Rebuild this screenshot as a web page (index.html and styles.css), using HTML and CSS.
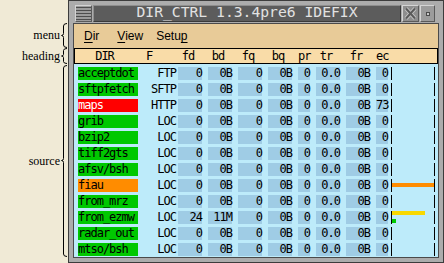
FILE: index.html
```html
<!DOCTYPE html>
<html lang="en">
<head>
    <meta charset="UTF-8">
    <title>DIR_CTRL</title>
    <link rel="stylesheet" href="styles.css">
</head>
<body>
    <div class="notes">
        <div class="note note-menu">
            <span>menu</span>
            <svg width="6" height="25" viewBox="0 0 6 25"><path d="M6,0.5 Q2.5,0.5 2.5,3 V10.5 Q2.5,12.5 0.5,12.5 Q2.5,12.5 2.5,14.5 V22 Q2.5,24.5 6,24.5"/></svg>
        </div>
        <div class="note note-heading">
            <span>heading</span>
            <svg width="6" height="16" viewBox="0 0 6 16"><path d="M6,0.5 Q2.5,0.5 2.5,2.5 V6.5 Q2.5,8 0.5,8 Q2.5,8 2.5,9.5 V13.5 Q2.5,15.5 6,15.5"/></svg>
        </div>
        <div class="note note-source">
            <span>source</span>
            <svg width="6" height="192" viewBox="0 0 6 192"><path d="M6,0.5 Q2.5,0.5 2.5,3 V93.5 Q2.5,95.5 0.5,95.5 Q2.5,95.5 2.5,97.5 V189 Q2.5,191.5 6,191.5"/></svg>
        </div>
    </div>

    <div class="win">
        <div class="titlebar">
            <div class="tbtn menu-btn"></div>
            <div class="title">DIR_CTRL 1.3.4pre6 IDEFIX</div>
            <div class="tbtn close-btn">
                <svg width="15" height="15" viewBox="0 0 15 15">
                    <path class="x-light" d="M3,2.5 L12,12.5 M12,2.5 L3,12.5"/>
                    <path class="x-dark" d="M3,2.5 L12,12.5 M12,2.5 L3,12.5"/>
                </svg>
            </div>
            <div class="tbtn min-btn"><span></span></div>
        </div>

        <div class="client">
            <div class="menubar">
                <span><u>D</u>ir</span>
                <span><u>V</u>iew</span>
                <span>Setu<u>p</u></span>
            </div>

            <div class="heading">
                <div class="name">DIR</div>
                <div class="f">F</div>
                <div class="n">fd</div>
                <div class="n">bd</div>
                <div class="n">fq</div>
                <div class="n">bq</div>
                <div class="s">pr</div>
                <div class="n">tr</div>
                <div class="n">fr</div>
                <div class="s">ec</div>
            </div>

            <div class="data">
                <div class="row">
                    <div class="name ok">acceptdot</div><div class="f">FTP</div>
                    <div class="n">0</div><div class="n">0B</div><div class="n">0</div><div class="n">0B</div>
                    <div class="s">0</div><div class="n">0.0</div><div class="n">0B</div><div class="s">0</div>
                    <div class="bar"><div class="slot"></div><div class="slot"></div><div class="slot"></div></div>
                </div>
                <div class="row">
                    <div class="name ok">sftpfetch</div><div class="f">SFTP</div>
                    <div class="n">0</div><div class="n">0B</div><div class="n">0</div><div class="n">0B</div>
                    <div class="s">0</div><div class="n">0.0</div><div class="n">0B</div><div class="s">0</div>
                    <div class="bar"><div class="slot"></div><div class="slot"></div><div class="slot"></div></div>
                </div>
                <div class="row">
                    <div class="name err">maps</div><div class="f">HTTP</div>
                    <div class="n">0</div><div class="n">0B</div><div class="n">0</div><div class="n">0B</div>
                    <div class="s">0</div><div class="n">0.0</div><div class="n">0B</div><div class="s">73</div>
                    <div class="bar"><div class="slot"></div><div class="slot"></div><div class="slot"></div></div>
                </div>
                <div class="row">
                    <div class="name ok">grib</div><div class="f">LOC</div>
                    <div class="n">0</div><div class="n">0B</div><div class="n">0</div><div class="n">0B</div>
                    <div class="s">0</div><div class="n">0.0</div><div class="n">0B</div><div class="s">0</div>
                    <div class="bar"><div class="slot"></div><div class="slot"></div><div class="slot"></div></div>
                </div>
                <div class="row">
                    <div class="name ok">bzip2</div><div class="f">LOC</div>
                    <div class="n">0</div><div class="n">0B</div><div class="n">0</div><div class="n">0B</div>
                    <div class="s">0</div><div class="n">0.0</div><div class="n">0B</div><div class="s">0</div>
                    <div class="bar"><div class="slot"></div><div class="slot"></div><div class="slot"></div></div>
                </div>
                <div class="row">
                    <div class="name ok">tiff2gts</div><div class="f">LOC</div>
                    <div class="n">0</div><div class="n">0B</div><div class="n">0</div><div class="n">0B</div>
                    <div class="s">0</div><div class="n">0.0</div><div class="n">0B</div><div class="s">0</div>
                    <div class="bar"><div class="slot"></div><div class="slot"></div><div class="slot"></div></div>
                </div>
                <div class="row">
                    <div class="name ok">afsv/bsh</div><div class="f">LOC</div>
                    <div class="n">0</div><div class="n">0B</div><div class="n">0</div><div class="n">0B</div>
                    <div class="s">0</div><div class="n">0.0</div><div class="n">0B</div><div class="s">0</div>
                    <div class="bar"><div class="slot"></div><div class="slot"></div><div class="slot"></div></div>
                </div>
                <div class="row">
                    <div class="name warn">fiau</div><div class="f">LOC</div>
                    <div class="n">0</div><div class="n">0B</div><div class="n">0</div><div class="n">0B</div>
                    <div class="s">0</div><div class="n">0.0</div><div class="n">0B</div><div class="s">0</div>
                    <div class="bar"><div class="slot"></div><div class="slot"><i class="orange" style="width:42px"></i></div><div class="slot"></div></div>
                </div>
                <div class="row">
                    <div class="name ok">from_mrz</div><div class="f">LOC</div>
                    <div class="n">0</div><div class="n">0B</div><div class="n">0</div><div class="n">0B</div>
                    <div class="s">0</div><div class="n">0.0</div><div class="n">0B</div><div class="s">0</div>
                    <div class="bar"><div class="slot"></div><div class="slot"></div><div class="slot"></div></div>
                </div>
                <div class="row">
                    <div class="name ok">from_ezmw</div><div class="f">LOC</div>
                    <div class="n">24</div><div class="n">11M</div><div class="n">0</div><div class="n">0B</div>
                    <div class="s">0</div><div class="n">0.0</div><div class="n">0B</div><div class="s">0</div>
                    <div class="bar"><div class="slot"><i class="yellow" style="width:33px"></i></div><div class="slot"></div><div class="slot"><i class="green" style="width:4px"></i></div></div>
                </div>
                <div class="row">
                    <div class="name ok">radar_out</div><div class="f">LOC</div>
                    <div class="n">0</div><div class="n">0B</div><div class="n">0</div><div class="n">0B</div>
                    <div class="s">0</div><div class="n">0.0</div><div class="n">0B</div><div class="s">0</div>
                    <div class="bar"><div class="slot"></div><div class="slot"></div><div class="slot"></div></div>
                </div>
                <div class="row">
                    <div class="name ok">mtso/bsh</div><div class="f">LOC</div>
                    <div class="n">0</div><div class="n">0B</div><div class="n">0</div><div class="n">0B</div>
                    <div class="s">0</div><div class="n">0.0</div><div class="n">0B</div><div class="s">0</div>
                    <div class="bar"><div class="slot"></div><div class="slot"></div><div class="slot"></div></div>
                </div>
            </div>
        </div>
    </div>
</body>
</html>
```

FILE: styles.css
```css
body{
    margin: 0;
    width: 444px;
    height: 263px;
    display: flex;
    background: #f0ead6;
    overflow: hidden;
}

/* annotations on the left */
.notes{
    width: 68px;
    flex: none;
    padding-top: 23px;
    box-sizing: border-box;
    display: flex;
    flex-direction: column;
    font: 12px "Liberation Serif", serif;
    color: #000;
}
.note{
    display: flex;
    align-items: center;
    justify-content: flex-end;
}
.note svg{
    flex: none;
    margin: 0 1px 0 1px;
}
.note path{
    fill: none;
    stroke: #000;
    stroke-width: 1;
}
.note-menu{ height: 25px; }
.note-heading{ height: 16px; }
.note-source{ height: 192px; margin-top: 1px; }

/* window frame */
.win{
    width: 376px;
    height: 263px;
    flex: none;
    box-sizing: border-box;
    border: 1px solid #3c3c3c;
    background: #acacac;
    padding: 4px 4px;
    display: flex;
    flex-direction: column;
}
.titlebar{
    display: flex;
    height: 17px;
    gap: 1px;
    padding: 0 4px 0 2px;
    margin-bottom: 1px;
}
.tbtn{
    box-sizing: border-box;
    border: 1px solid;
    border-color: #d4d4d4 #5a5a5a #5a5a5a #d4d4d4;
    background: #9c9c9c;
}
.menu-btn{
    width: 17px;
    background: repeating-linear-gradient(#9c9c9c 0 1px, #4e4e4e 1px 2px, #9c9c9c 2px 3px);
}
.title{
    flex: 1;
    box-sizing: border-box;
    border: 1px solid;
    border-color: #8e8e8e #3a3a3a #3a3a3a #8e8e8e;
    background: #5c5c5c;
    color: #e2e2e2;
    font: 14.7px "DejaVu Sans Mono", monospace;
    line-height: 12px;
    text-align: center;
    white-space: nowrap;
}
.close-btn{
    width: 17px;
    background: #8e8e8e;
}
.close-btn svg{
    display: block;
}
.x-light{
    stroke: #c4c4c4;
    stroke-width: 4;
}
.x-dark{
    stroke: #5a5a5a;
    stroke-width: 2;
}
.min-btn{
    width: 15px;
    display: flex;
    align-items: center;
    justify-content: center;
}
.min-btn span{
    width: 4px;
    height: 4px;
    box-sizing: border-box;
    border: 1px solid #4a4a4a;
    background: #c8c8c8;
}

/* client area */
.client{
    flex: 1;
    display: flex;
    flex-direction: column;
    border: 1px solid #4a4a4a;
}
.menubar{
    height: 24px;
    flex: none;
    background: #e8cb98;
    padding-left: 10px;
    display: flex;
    font: 12px "Liberation Sans", sans-serif;
    line-height: 24px;
    color: #000;
}
.menubar span + span{ margin-left: 18px; }
.menubar span:last-child{ margin-left: 13px; }
.menubar u{
    text-underline-offset: 2px;
}

.heading,
.row{
    display: flex;
    font: 12px "DejaVu Sans Mono", monospace;
    letter-spacing: -1px;
    color: #000;
    white-space: nowrap;
}
.heading{
    height: 16px;
    flex: none;
    box-sizing: border-box;
    border: 1px solid #000;
    background: #f9dca8;
    padding-left: 3px;
    line-height: 14px;
}

.name{ width: 60px; flex: none; }
.f{ width: 38px; flex: none; text-align: right; box-sizing: border-box; }
.n{ width: 24px; flex: none; margin-left: 6px; text-align: right; box-sizing: border-box; }
.s{ width: 12px; flex: none; margin-left: 6px; text-align: right; box-sizing: border-box; }
.f + .n{ margin-left: 2px; }

.heading .name{ text-align: center; padding-right: 7px; box-sizing: border-box; }
.heading .f{ text-align: left; padding-left: 8px; }
.heading .n,
.heading .s{ text-align: center; padding-right: 4px; }
.heading .s{ padding-right: 0; }

.data{
    flex: 1;
    background: #bdebfa;
    padding: 3px 0 0 4px;
    display: flex;
    flex-direction: column;
    gap: 3px;
}
.row{
    height: 13px;
    line-height: 13px;
}
.row .n,
.row .s{
    background: #9fcce5;
}
.ok{ background: #00c800; }
.err{ background: #ff0000; color: #fff; }
.warn{ background: #ff8c00; }

.bar{
    width: 44px;
    flex: none;
    margin-left: 3px;
    box-sizing: border-box;
    border-left: 1px solid #000;
    border-right: 1px solid #000;
    display: flex;
    flex-direction: column;
}
.slot{
    height: 4px;
    display: flex;
}
.slot i{ height: 4px; display: block; }
.orange{ background: #ff8c00; }
.yellow{ background: #f8d800; }
.green{ background: #00c800; }
```
